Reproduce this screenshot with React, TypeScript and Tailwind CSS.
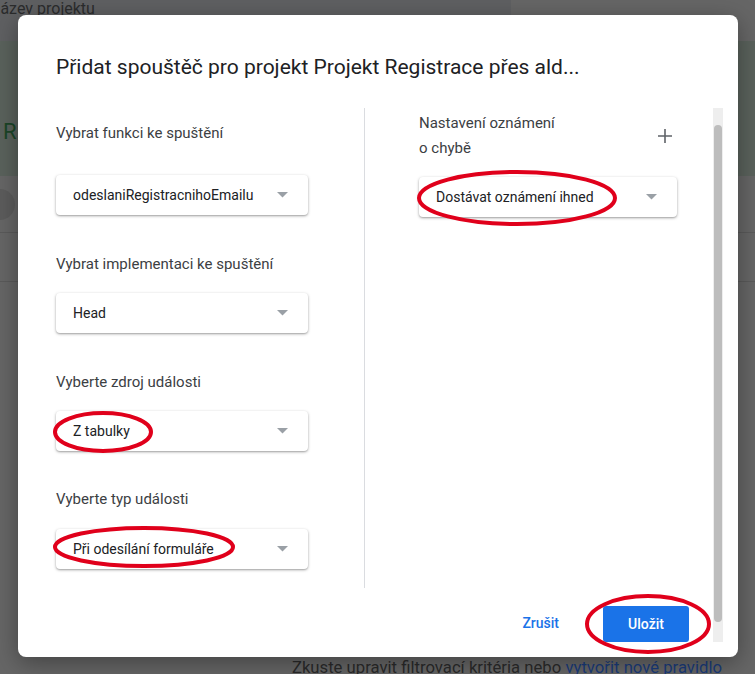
import React from "react";

const Arrow = () => (
  <svg width="11" height="6" viewBox="0 0 11 6" className="shrink-0">
    <path d="M0 0 L11 0 L5.5 5.5 Z" fill="#9aa0a6" />
  </svg>
);

const Select = ({ value, width = "w-[252px]" }: { value: string; width?: string }) => (
  <div
    className={`${width} h-[40px] flex items-center justify-between pl-[17px] pr-[20px] bg-white rounded-[4px] shadow-[0_1px_3px_rgba(0,0,0,0.35),0_1px_1px_rgba(0,0,0,0.08)] text-[14px] text-[#202124]`}
  >
    <span>{value}</span>
    <Arrow />
  </div>
);

const Label = ({ children, className = "" }: { children: React.ReactNode; className?: string }) => (
  <div className={`text-[15px] leading-[20px] text-[#3c4043] ${className}`}>{children}</div>
);

export default function App() {
  return (
    <div className="relative w-[755px] h-[674px] overflow-hidden bg-[#666666] font-['Roboto',sans-serif]">
      {/* page behind the overlay */}
      <div className="flex flex-col h-full">
        <div className="h-[41px] flex shrink-0">
          <div className="w-[511px] bg-[#5f6062] text-[16px] leading-[18px] text-[#2b2c2d] overflow-hidden">
            <span className="block -ml-[11px]">Název projektu</span>
          </div>
          <div className="flex-1" />
        </div>
        <div className="h-[135px] shrink-0 bg-[#5a625c] pt-[78px] pl-[3px] text-[22px] leading-[26px] text-[#1b4527]">
          R
        </div>
        <div className="h-[56px] shrink-0 flex items-center">
          <div className="-ml-[18px] w-[33px] h-[31px] rounded-full bg-[#5c5c5c]" />
        </div>
        <div className="h-px shrink-0 bg-[#5a5a5a]" />
        <div className="h-[48px] shrink-0" />
        <div className="h-px shrink-0 bg-[#5a5a5a]" />
        <div className="h-[374px] shrink-0" />
        <div className="shrink-0 flex justify-end pr-[33px] text-[16.7px] leading-[24px] text-[#2a2a2a]">
          <span>
            Zkuste upravit filtrovací kritéria nebo{" "}
            <span className="text-[#1a3b7a]">vytvořit nové pravidlo</span>
          </span>
        </div>
      </div>

      {/* dialog */}
      <div className="absolute left-[18px] top-[15px] w-[720px] h-[642px] bg-white rounded-[8px] shadow-[0_6px_24px_rgba(0,0,0,0.35)] flex flex-col pb-[15px]">
        <div className="h-[93px] shrink-0 pl-[38px] pt-[37px] text-[21px] leading-[30px] text-[#202124]">
          Přidat spouštěč pro projekt Projekt Registrace přes ald...
        </div>
        <div className="flex flex-1 min-h-0">
          <div className="flex-1 flex flex-col">
            <div className="h-[480px] flex">
              <div className="w-[346px] pl-[38px] pt-[15px] flex flex-col">
                <Label>Vybrat funkci ke spuštění</Label>
                <div className="mt-[32px]">
                  <Select value="odeslaniRegistracnihoEmailu" />
                </div>
                <Label className="mt-[39px]">Vybrat implementaci ke spuštění</Label>
                <div className="mt-[19px]">
                  <Select value="Head" />
                </div>
                <Label className="mt-[39px]">Vyberte zdroj události</Label>
                <div className="mt-[19px]">
                  <Select value="Z tabulky" />
                </div>
                <Label className="mt-[38px]">Vyberte typ události</Label>
                <div className="mt-[20px]">
                  <Select value="Při odesílání formuláře" />
                </div>
              </div>
              <div className="w-px bg-[#dadce0]" />
              <div className="pl-[54px] pt-[3px] flex flex-col">
                <div className="w-[258px] flex items-center justify-between pr-[4px]">
                  <div className="text-[15px] leading-[25px] text-[#3c4043]">
                    Nastavení oznámení
                    <br />o chybě
                  </div>
                  <svg width="16" height="16" viewBox="0 0 16 16">
                    <path d="M8 1 V15 M1 8 H15" stroke="#5f6368" strokeWidth="1.6" />
                  </svg>
                </div>
                <div className="mt-[16px]">
                  <Select value="Dostávat oznámení ihned" width="w-[258px]" />
                </div>
              </div>
            </div>
            <div className="flex-1 flex justify-end items-end pr-[24px]">
              <span className="mb-[8px] mr-[44px] text-[14px] font-medium text-[#1a73e8]">Zrušit</span>
              <button className="w-[86px] h-[36px] rounded-[3px] bg-[#1a73e8] text-white text-[14px] font-medium">
                Uložit
              </button>
            </div>
          </div>
          <div className="w-[10px] mr-[15px] bg-[#eeeeee] pt-[17px] pb-[20px] flex justify-center">
            <div className="w-[8px] h-full rounded-full bg-[#bdbdbd]" />
          </div>
        </div>
      </div>

      {/* red annotation marks */}
      <svg className="absolute inset-0 pointer-events-none" width="755" height="674">
        <g fill="none" stroke="#e0001b" strokeWidth="4">
          <ellipse cx="103" cy="432" rx="48" ry="19" />
          <ellipse cx="144" cy="547" rx="89" ry="19" />
          <ellipse cx="517" cy="198" rx="98" ry="26" />
          <ellipse cx="648" cy="624" rx="61" ry="28" />
        </g>
      </svg>
    </div>
  );
}
